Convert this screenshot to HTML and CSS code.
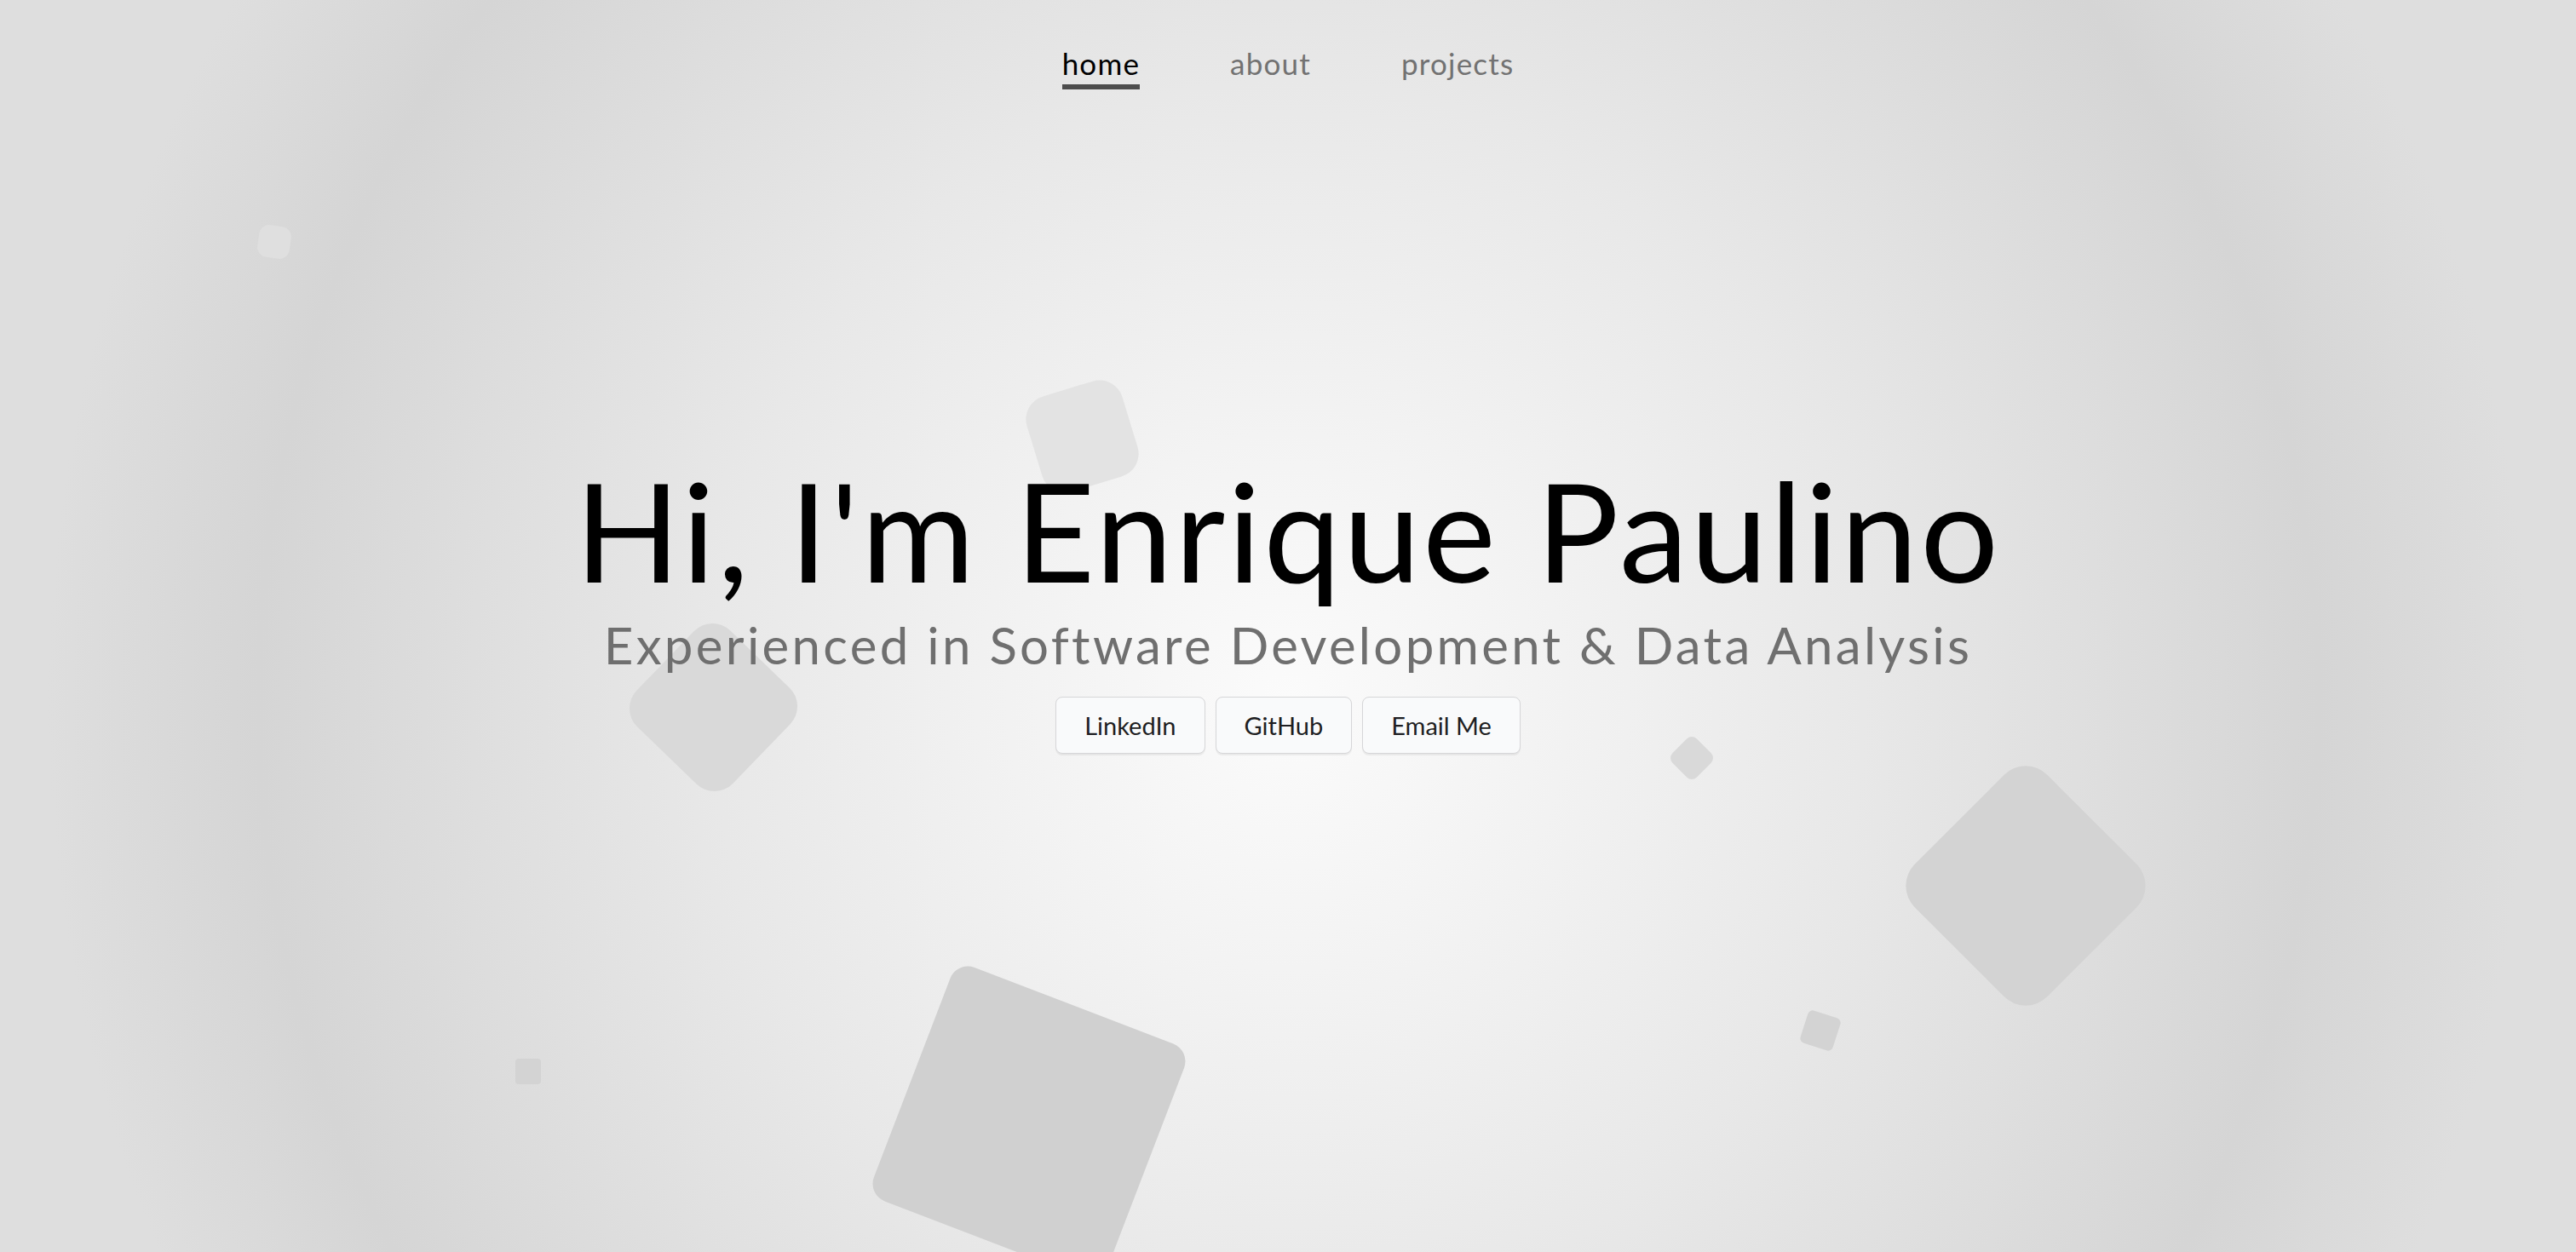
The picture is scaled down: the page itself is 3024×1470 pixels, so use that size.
FILE: index.html
```html
<!DOCTYPE html>
<html lang="en">
<head>
<meta charset="utf-8">
<title>Enrique Paulino</title>
<link rel="stylesheet" href="styles.css">
</head>
<body>
<div class="page">
  <div class="shapes" aria-hidden="true">
    <div class="shape s-blob"></div>
    <div class="shape s-top"></div>
    <div class="shape s-left"></div>
    <div class="shape s-small-diamond"></div>
    <div class="shape s-small-square"></div>
    <div class="shape s-tiny"></div>
    <div class="shape s-right"></div>
    <div class="shape s-bottom"></div>
  </div>
  <nav class="nav">
    <a class="nav-link active" href="#">home</a>
    <a class="nav-link" href="#">about</a>
    <a class="nav-link" href="#">projects</a>
  </nav>
  <main class="hero">
    <h1 class="title">Hi, I'm Enrique Paulino</h1>
    <p class="subtitle">Experienced in Software Development &amp; Data Analysis</p>
    <div class="buttons">
      <a class="btn" href="#">LinkedIn</a>
      <a class="btn" href="#">GitHub</a>
      <a class="btn" href="#">Email Me</a>
    </div>
  </main>
</div>
</body>
</html>
```

FILE: styles.css
```css
html, body {
  margin: 0;
  padding: 0;
}

body {
  font-family: Lato, "Open Sans", sans-serif;
  overflow: hidden;
}

.page {
  position: relative;
  height: 100vh;
  overflow: hidden;
  background: radial-gradient(ellipse 1300px 1400px at 50% 56%, #fbfbfb 0%, #f1f1f1 28%, #e8e8e8 52%, #dcdcdc 78%, #d5d5d5 93%, #dedede 112%);
}

.shapes {
  position: absolute;
  inset: 0;
  z-index: 0;
}

.shape {
  position: absolute;
}

.s-blob {
  left: 303px; top: 265px;
  width: 38px; height: 38px;
  border-radius: 12px;
  transform: rotate(8deg);
  background: #dfdfdf;
}

.s-top {
  left: 1212px; top: 454px;
  width: 117px; height: 117px;
  border-radius: 28px;
  transform: rotate(-17deg);
  background: #e3e3e3;
}

.s-left {
  left: 759px; top: 752px;
  width: 157px; height: 157px;
  border-radius: 30px;
  transform: rotate(44deg);
  background: #d9d9d9;
}

.s-small-diamond {
  left: 1966px; top: 870px;
  width: 40px; height: 40px;
  border-radius: 8px;
  transform: rotate(45deg);
  background: #d9d9d9;
}

.s-small-square {
  left: 2117px; top: 1190px;
  width: 40px; height: 40px;
  border-radius: 6px;
  transform: rotate(18deg);
  background: #d3d3d3;
}

.s-tiny {
  left: 605px; top: 1243px;
  width: 30px; height: 30px;
  border-radius: 4px;
  background: #d3d3d3;
}

.s-right {
  left: 2268px; top: 930px;
  width: 220px; height: 220px;
  border-radius: 36px;
  transform: rotate(45deg);
  background: #d3d3d3;
}

.s-bottom {
  left: 1061px; top: 1171px;
  width: 294px; height: 294px;
  border-radius: 22px;
  transform: rotate(21deg);
  background: #d0d0d0;
}

.nav {
  position: relative;
  z-index: 1;
  display: flex;
  justify-content: center;
  gap: 106px;
  padding-top: 53px;
}

.nav-link {
  font-size: 35px;
  line-height: 42px;
  letter-spacing: 1.2px;
  color: #727272;
  text-decoration: none;
  padding-bottom: 4px;
  border-bottom: 6px solid transparent;
}

.nav-link.active {
  color: #000;
  border-bottom-color: #4d4d4d;
}

.hero {
  position: relative;
  z-index: 1;
  display: flex;
  flex-direction: column;
  align-items: center;
  padding-top: 436px;
}

.title {
  margin: 0;
  font-size: 162px;
  line-height: 162px;
  font-weight: 400;
  letter-spacing: 3px;
  color: #000;
}

.subtitle {
  margin: 24px 0 0;
  font-size: 60px;
  line-height: 60px;
  font-weight: 400;
  letter-spacing: 3.3px;
  color: #6f6f6f;
}

.buttons {
  display: flex;
  gap: 12px;
  margin-top: 31px;
}

.btn {
  font-size: 29px;
  line-height: 35px;
  color: #1e1e22;
  text-decoration: none;
  padding: 15px 33px;
  background: #f9fafb;
  border: 1.5px solid #d6d6d8;
  border-radius: 8px;
  box-shadow: 0 1.5px 1px rgba(0, 0, 0, 0.06);
}
```
